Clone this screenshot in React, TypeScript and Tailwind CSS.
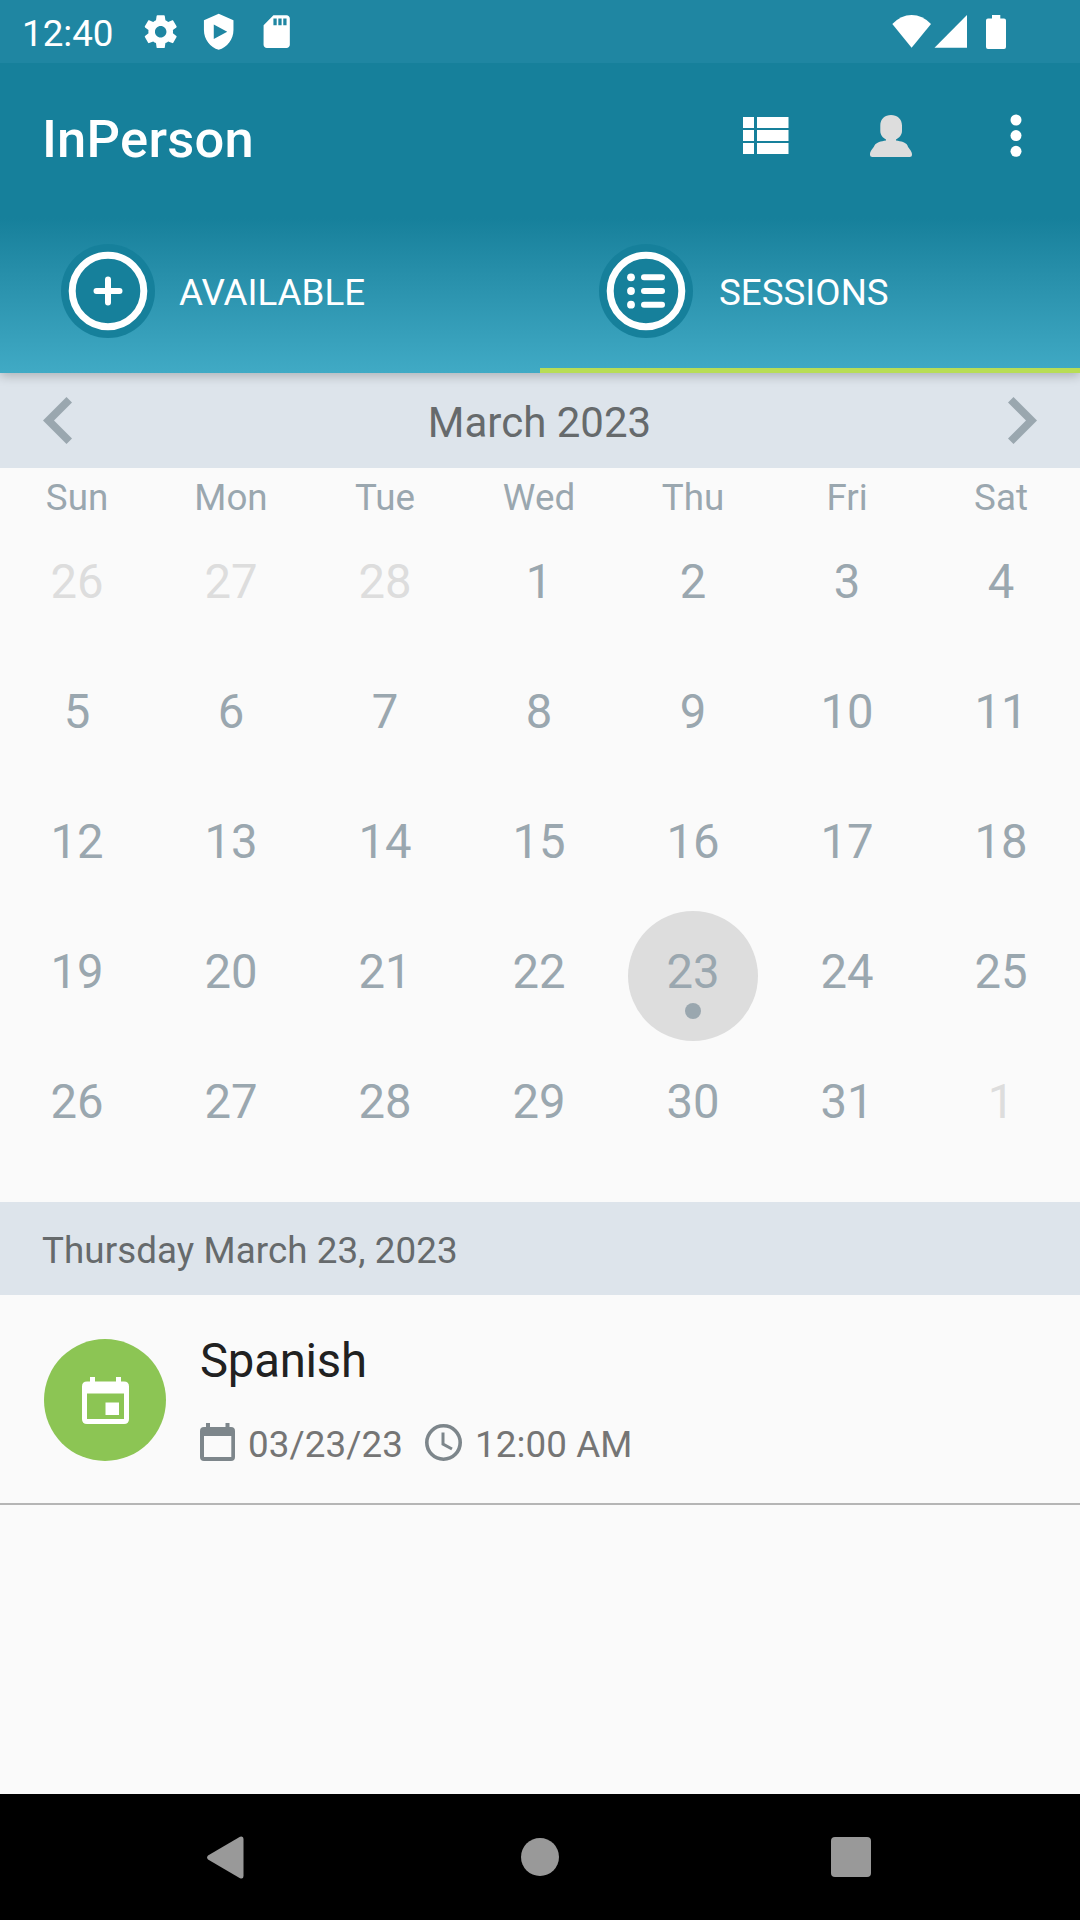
import type { ReactNode } from "react";

interface Day {
  label: number;
  outside?: boolean;
  selected?: boolean;
}

interface Session {
  title: string;
  date: string;
  time: string;
}

const WEEKDAYS = ["Sun", "Mon", "Tue", "Wed", "Thu", "Fri", "Sat"];

const DAYS: Day[] = [
  ...[26, 27, 28].map((label) => ({ label, outside: true })),
  ...Array.from({ length: 31 }, (_, i) => ({ label: i + 1, selected: i + 1 === 23 })),
  { label: 1, outside: true },
];

const SESSIONS: Session[] = [{ title: "Spanish", date: "03/23/23", time: "12:00 AM" }];

function StatusIcon({ d }: { d: string }) {
  return (
    <svg viewBox="0 0 24 24" className="size-[39.4px] shrink-0" fill="white">
      <path d={d} fillRule="evenodd" />
    </svg>
  );
}

function StatusBar() {
  return (
    <div className="flex h-[63px] items-center justify-between bg-[#1f86a2] pl-[22px] pr-[74px]">
      <div className="flex items-center">
        <span className="w-[119px] pt-[4px] text-[36.75px] leading-[59px]">12:40</span>
        <div className="flex gap-[18.6px]">
          <StatusIcon d="M19.43 12.98c.04-.32.07-.64.07-.98s-.03-.66-.07-.98l2.11-1.65c.19-.15.24-.42.12-.64l-2-3.46c-.12-.22-.39-.3-.61-.22l-2.49 1c-.52-.4-1.08-.73-1.69-.98l-.38-2.65C14.46 2.18 14.25 2 14 2h-4c-.25 0-.46.18-.49.42l-.38 2.65c-.61.25-1.17.59-1.69.98l-2.49-1c-.23-.09-.49 0-.61.22l-2 3.46c-.13.22-.07.49.12.64l2.11 1.65c-.04.32-.07.65-.07.98s.03.66.07.98l-2.11 1.65c-.19.15-.24.42-.12.64l2 3.46c.12.22.39.3.61.22l2.49-1c.52.4 1.08.73 1.69.98l.38 2.65c.03.24.24.42.49.42h4c.25 0 .46-.18.49-.42l.38-2.65c.61-.25 1.17-.59 1.69-.98l2.49 1c.23.09.49 0 .61-.22l2-3.46c.12-.22.07-.49-.12-.64l-2.11-1.65zM12 15.5c-1.93 0-3.5-1.57-3.5-3.5s1.57-3.5 3.5-3.5 3.5 1.57 3.5 3.5-1.57 3.5-3.5 3.5z" />
          <StatusIcon d="M12 1L3 5v6c0 5.55 3.84 10.74 9 12 5.16-1.26 9-6.45 9-12V5l-9-4zM9 7.6L17.2 12L9 16.4z" />
          <StatusIcon d="M18 2h-8L4.02 8 4 20c0 1.1.9 2 2 2h12c1.1 0 2-.9 2-2V4c0-1.1-.9-2-2-2zm-6 6h-2V4h2v4zm3 0h-2V4h2v4zm3 0h-2V4h2v4z" />
        </div>
      </div>
      <svg viewBox="892 14 114 34" className="h-[34px] w-[114px]" fill="white">
        <path d="M892.3 23Q901 14 911.6 14Q922.500 14 931 23L911.600 46.700z" />
        <path d="M934.500 46.700L967 14V46.700z" />
        <path d="M992 14h8.300v3.500h3.700q2 0 2 2V46q0 2-2 2H988q-2 0-2-2V19.500q0-2 2-2h4z" />
      </svg>
    </div>
  );
}

function Toolbar() {
  return (
    <div className="flex h-[147px] items-center justify-between bg-[#16809b] pl-[42px] pr-[58px]">
      <h1 className="pt-[4px] text-[52.5px] font-medium leading-[60px] tracking-[0.25px]">InPerson</h1>
      <div className="flex items-center pb-[2px]">
        <svg viewBox="0 0 46 37" className="mr-[81px] h-[37px] w-[46px]" fill="white">
          <path d="M0 0h11v11H0zM14 0h31.500v11H14zM0 13h11v11H0zM14 13h31.500v11H14zM0 26h11v11H0zM14 26h31.500v11H14z" />
        </svg>
        <svg viewBox="0 0 42 42" className="mr-[98px] size-[42px]" fill="#dddddd">
          <path d="M21 0C27 0 32 4 32 10.500V16C32 20 29 23 26 24.500V25.500C31 26.500 36 27 37.500 30.500C38.500 34 42 35.500 42 39.500Q42 42 39.500 42H2.500Q0 42 0 39.500C0 35.500 3 34 4.500 30.500C6.500 27 11 26.500 16 25.500V24.500C13 23 10.300 20 10.300 16V10.500C10.300 4 15 0 21 0z" />
        </svg>
        <svg viewBox="0 0 12 43" className="h-[43px] w-[12px]" fill="white">
          <circle cx="6" cy="6" r="5.500" />
          <circle cx="6" cy="21.600" r="5.500" />
          <circle cx="6" cy="37.300" r="5.500" />
        </svg>
      </div>
    </div>
  );
}

function Tab({ label, active, children }: { label: string; active?: boolean; children: ReactNode }) {
  return (
    <button
      className={`flex w-[540px] items-center border-b-[5px] pt-[4px] ${
        active ? "gap-[26px] border-[#b8dd55] pl-[59px]" : "gap-[24px] border-transparent pl-[61px]"
      }`}
    >
      <svg viewBox="-47 -47 94 94" className="size-[94px]">
        <circle r="47" fill="#16809b" />
        <circle r="35.800" fill="none" stroke="white" strokeWidth="7" />
        {children}
      </svg>
      <span className="pt-[3px] text-[36.75px] leading-[44px]">{label}</span>
    </button>
  );
}

function Tabs() {
  return (
    <div className="flex h-[163px] bg-gradient-to-b from-[#16809b] from-5% to-[#40aac5]">
      <Tab label="AVAILABLE">
        <path d="M-11.500 0H11.500M0 -11.500V11.500" stroke="white" strokeWidth="6" strokeLinecap="round" />
      </Tab>
      <Tab label="SESSIONS" active>
        {[-13.7, 0, 13.7].map((y) => (
          <g key={y}>
            <circle cx="-15" cy={y} r="3.900" fill="white" />
            <path d={`M-2 ${y}H16`} stroke="white" strokeWidth="6" strokeLinecap="round" />
          </g>
        ))}
      </Tab>
    </div>
  );
}

function MonthBar() {
  return (
    <div className="flex h-[95px] items-center justify-between bg-[#dde4eb] px-[43px]">
      <svg viewBox="0 0 29 47" className="h-[47px] w-[29px]" fill="#9aa7af">
        <path d="M23.500 0L29 5.500L11 23.500L29 41.500L23.500 47L0 23.500z" />
      </svg>
      <h2 className="pr-[1px] pt-[4px] text-[42px] leading-[50px] text-[#666a6c]">March 2023</h2>
      <svg viewBox="0 0 29 47" className="h-[47px] w-[29px]" fill="#9aa7af">
        <path d="M5.500 0L0 5.500L18 23.500L0 41.500L5.500 47L29 23.500z" />
      </svg>
    </div>
  );
}

function Calendar() {
  return (
    <div className="w-[1078px] pb-[31px] text-center text-[#9aa7af]">
      <div className="grid h-[53px] grid-cols-7 pt-[8px] text-[36.75px] leading-[43px]">
        {WEEKDAYS.map((day) => (
          <span key={day}>{day}</span>
        ))}
      </div>
      <div className="grid grid-cols-7 justify-items-center">
        {DAYS.map((day, i) => (
          <div
            key={i}
            className={`relative size-[130px] rounded-full text-[47.25px] leading-[122px] ${
              day.selected ? "bg-[#dddddd]" : ""
            } ${day.outside ? "text-[#dddddd]" : ""}`}
          >
            {day.label}
            {day.selected && (
              <span className="absolute left-[57px] top-[92px] size-[16px] rounded-full bg-[#9aa7af]" />
            )}
          </div>
        ))}
      </div>
    </div>
  );
}

function SessionRow({ session }: { session: Session }) {
  return (
    <div className="flex h-[210px] border-b-2 border-[#b5b5b5] pl-[44px] pt-[38px]">
      <div className="mt-[6px] flex size-[122px] items-center justify-center rounded-full bg-[#8cc554]">
        <svg viewBox="0 0 47 47" className="size-[47px]" fill="white">
          <path
            d="M8 0h5v4.500h21V0h5v4.500h3q5 0 5 5V42q0 5-5 5H5q-5 0-5-5V9.500q0-5 5-5h3zM5 16.500V42H42V16.500z"
            fillRule="evenodd"
          />
          <path d="M23.500 25.500H37V38H23.500z" />
        </svg>
      </div>
      <div className="ml-[34px]">
        <h3 className="text-[47.25px] leading-[56px] tracking-[-0.2px] text-[#212121]">{session.title}</h3>
        <div className="mt-[31px] flex h-[44px] items-center text-[36.75px] tracking-[0.1px] text-[#757575]">
          <svg viewBox="0 0 35 38" className="h-[38px] w-[35px]" fill="#7d868b">
            <path
              d="M6 0h4v4h15.500V0h4v4H31q4 0 4 4V34q0 4-4 4H4q-4 0-4-4V8q0-4 4-4h2zM4 13V34H31.300V13z"
              fillRule="evenodd"
            />
          </svg>
          <span className="ml-[13px] w-[177px] pt-[5px] leading-[44px]">{session.date}</span>
          <svg viewBox="-18.5 -18.5 37 37" className="size-[37px]" fill="none" stroke="#7d868b">
            <circle r="16.700" strokeWidth="3.600" />
            <path d="M-.5 -10V1.500L8.500 6.500" strokeWidth="3" />
          </svg>
          <span className="ml-[13px] pt-[5px] leading-[44px]">{session.time}</span>
        </div>
      </div>
    </div>
  );
}

function NavigationBar() {
  return (
    <div className="flex h-[126px] items-center justify-between bg-black pl-[207px] pr-[209px]">
      <svg viewBox="0 0 37 43" className="h-[43px] w-[37px]" fill="#999999">
        <path d="M1 19.500L33 .7Q36.500 -.5 36.500 3V40Q36.500 43.500 33 42.300L1 23.500Q-.8 21.500 1 19.500z" />
      </svg>
      <div className="ml-[5px] size-[38px] rounded-full bg-[#999999]" />
      <div className="size-[40px] rounded-[4px] bg-[#999999]" />
    </div>
  );
}

export default function App() {
  return (
    <div className="flex h-[1920px] w-[1080px] flex-col overflow-hidden bg-[#fafafa] font-[Roboto,sans-serif]">
      <header className="relative z-10 text-white shadow-[0_3px_10px_rgba(0,0,0,0.22)]">
        <StatusBar />
        <Toolbar />
        <Tabs />
      </header>
      <main className="flex-1">
        <MonthBar />
        <Calendar />
        <div className="h-[93px] bg-[#dde4eb] pl-[42px] pt-[26px] text-[36.75px] leading-[45px] tracking-[0.08px] text-[#666a6c]">
          Thursday March 23, 2023
        </div>
        {SESSIONS.map((session) => (
          <SessionRow key={session.title} session={session} />
        ))}
      </main>
      <NavigationBar />
    </div>
  );
}
